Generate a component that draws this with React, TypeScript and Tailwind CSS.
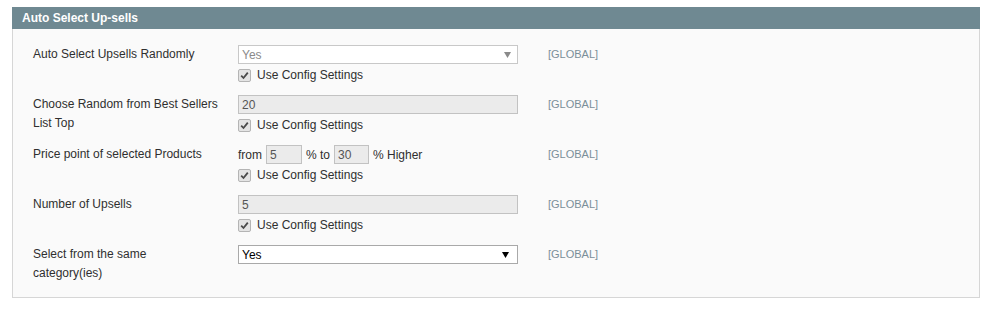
import React from "react";

const font = { fontFamily: '"Liberation Sans", Arial, sans-serif' };

function Check() {
  return (
    <span className="inline-flex h-[13px] w-[13px] items-center justify-center rounded-[2px] border border-[#b4b4b4] bg-[#e4e4e4]">
      <svg width="9" height="9" viewBox="0 0 9 9">
        <path d="M1.2 4.6 L3.5 7 L7.8 1.6" fill="none" stroke="#4a4a4a" strokeWidth="1.8" />
      </svg>
    </span>
  );
}

function ConfigLine() {
  return (
    <div className="flex h-[22px] items-center gap-[6px] text-[12px] text-[#2f2f2f]">
      <Check />
      <span>Use Config Settings</span>
    </div>
  );
}

function Arrow({ color }: { color: string }) {
  return (
    <svg width="7" height="6" viewBox="0 0 7 6">
      <path d="M0 0 H7 L3.5 6 Z" fill={color} />
    </svg>
  );
}

function Row({ label, children }: { label: React.ReactNode; children: React.ReactNode }) {
  return (
    <div className="flex">
      <div className="w-[205px] shrink-0 text-[12px] leading-[19px] text-[#2f2f2f]">{label}</div>
      <div className="w-[280px] shrink-0">{children}</div>
      <div className="ml-[30px] flex h-[19px] items-center text-[11px] text-[#7a8f99]">[GLOBAL]</div>
    </div>
  );
}

function DisabledInput({ value, w }: { value: string; w?: string }) {
  return (
    <div className={`flex h-[19px] items-center border border-[#c2c2c2] bg-[#ebebeb] pl-[3px] text-[12px] text-[#555] ${w ?? "w-[280px]"}`}>
      {value}
    </div>
  );
}

export default function App() {
  return (
    <div className="bg-white pl-[12px] pr-[9px] pt-[7px] pb-[14px]" style={font}>
      <div className="flex h-[22px] items-center bg-[#6f8992] pl-[10px] text-[12px] font-bold text-white">
        Auto Select Up-sells
      </div>
      <div className="border border-t-0 border-[#d6d6d6] bg-[#fafafa] pl-[20px] pt-[16px] pb-[14px]">
        <div className="flex flex-col gap-[9px]">
          <Row label="Auto Select Upsells Randomly">
            <div className="flex h-[19px] w-[280px] items-center justify-between border border-[#c8c8c8] bg-white pl-[3px] pr-[6px] text-[12px] text-[#8a8a8a]">
              <span>Yes</span>
              <Arrow color="#8a8a8a" />
            </div>
            <ConfigLine />
          </Row>
          <Row
            label={
              <>
                <div>Choose Random from Best Sellers</div>
                <div>List Top</div>
              </>
            }
          >
            <DisabledInput value="20" />
            <ConfigLine />
          </Row>
          <Row label="Price point of selected Products">
            <div className="flex h-[19px] items-center text-[12px] text-[#2f2f2f]">
              <span>from</span>
              <DisabledInput value="5" w="ml-[4px] w-[36px]" />
              <span className="ml-[4px]">% to</span>
              <DisabledInput value="30" w="ml-[4px] w-[35px]" />
              <span className="ml-[4px]">% Higher</span>
            </div>
            <ConfigLine />
          </Row>
          <Row label="Number of Upsells">
            <DisabledInput value="5" />
            <ConfigLine />
          </Row>
          <Row
            label={
              <>
                <div>Select from the same</div>
                <div>category(ies)</div>
              </>
            }
          >
            <div className="flex h-[19px] w-[280px] items-center justify-between border border-[#a9a9a9] bg-white pl-[3px] pr-[8px] text-[12px] text-black">
              <span>Yes</span>
              <Arrow color="#000" />
            </div>
          </Row>
        </div>
      </div>
    </div>
  );
}
